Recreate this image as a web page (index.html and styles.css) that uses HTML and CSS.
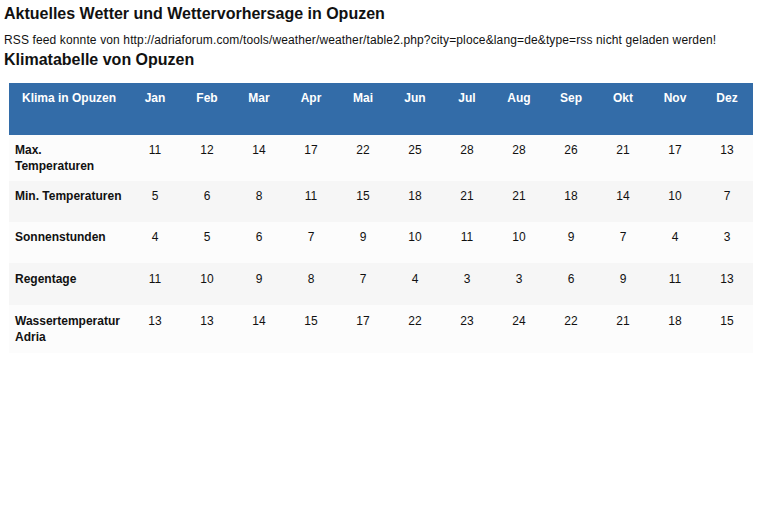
FILE: index.html
```html
<!DOCTYPE html>
<html lang="de">
<head>
<meta charset="utf-8">
<title>Klimatabelle von Opuzen</title>
<link rel="stylesheet" href="styles.css">
</head>
<body>
<h1 class="title">Aktuelles Wetter und Wettervorhersage in Opuzen</h1>
<p class="notice">RSS feed konnte von http://adriaforum.com/tools/weather/weather/table2.php?city=ploce&amp;lang=de&amp;type=rss nicht geladen werden!</p>
<h2 class="subtitle">Klimatabelle von Opuzen</h2>
<table class="climate">
  <colgroup>
    <col class="col-label">
    <col class="col-month"><col class="col-month"><col class="col-month"><col class="col-month">
    <col class="col-month"><col class="col-month"><col class="col-month"><col class="col-month">
    <col class="col-month"><col class="col-month"><col class="col-month"><col class="col-month">
  </colgroup>
  <thead>
    <tr class="head-row">
      <th>Klima in Opuzen</th><th>Jan</th><th>Feb</th><th>Mar</th><th>Apr</th><th>Mai</th><th>Jun</th><th>Jul</th><th>Aug</th><th>Sep</th><th>Okt</th><th>Nov</th><th>Dez</th>
    </tr>
  </thead>
  <tbody>
    <tr class="row odd">
      <td class="label">Max. Temperaturen</td><td>11</td><td>12</td><td>14</td><td>17</td><td>22</td><td>25</td><td>28</td><td>28</td><td>26</td><td>21</td><td>17</td><td>13</td>
    </tr>
    <tr class="row even">
      <td class="label">Min. Temperaturen</td><td>5</td><td>6</td><td>8</td><td>11</td><td>15</td><td>18</td><td>21</td><td>21</td><td>18</td><td>14</td><td>10</td><td>7</td>
    </tr>
    <tr class="row odd">
      <td class="label">Sonnenstunden</td><td>4</td><td>5</td><td>6</td><td>7</td><td>9</td><td>10</td><td>11</td><td>10</td><td>9</td><td>7</td><td>4</td><td>3</td>
    </tr>
    <tr class="row even row-rain">
      <td class="label">Regentage</td><td>11</td><td>10</td><td>9</td><td>8</td><td>7</td><td>4</td><td>3</td><td>3</td><td>6</td><td>9</td><td>11</td><td>13</td>
    </tr>
    <tr class="row odd row-last">
      <td class="label">Wassertemperatur Adria</td><td>13</td><td>13</td><td>14</td><td>15</td><td>17</td><td>22</td><td>23</td><td>24</td><td>22</td><td>21</td><td>18</td><td>15</td>
    </tr>
  </tbody>
</table>
</body>
</html>
```
FILE: styles.css
```css
html, body {
  background: #ffffff;
}
body {
  margin: 0;
  padding: 4px;
  font-family: "Liberation Sans", Arial, sans-serif;
  color: #111111;
}
.title {
  margin: 0;
  font-size: 16px;
  line-height: 20px;
  font-weight: bold;
}
.notice {
  margin: 9px 0 0;
  font-size: 12px;
  line-height: 14px;
  letter-spacing: 0.13px;
  white-space: nowrap;
}
.subtitle {
  margin: 3px 0 0;
  font-size: 16px;
  line-height: 20px;
  font-weight: bold;
}
.climate {
  margin: 13px 0 0 5px;
  width: 744px;
  table-layout: fixed;
  border-collapse: collapse;
  border-spacing: 0;
  font-size: 12px;
}
.col-label {
  width: 120px;
}
.col-month {
  width: 52px;
}
.head-row th {
  background: #336ca8;
  color: #ffffff;
  font-weight: bold;
  height: 52px;
  box-sizing: border-box;
  padding: 7px 6px 0;
  line-height: 16px;
  vertical-align: top;
  text-align: center;
}
.row td {
  padding: 7px 6px;
  line-height: 16px;
  vertical-align: top;
  text-align: center;
  height: 41px;
  box-sizing: border-box;
}
.row.row-rain td {
  padding-top: 8px;
  height: 42px;
}
.row.row-last td {
  padding-top: 8px;
  padding-bottom: 8px;
  height: 48px;
}
.row td.label {
  text-align: left;
  font-weight: bold;
}
.row.odd td {
  background: #fcfcfc;
}
.row.even td {
  background: #f6f6f6;
}
```
